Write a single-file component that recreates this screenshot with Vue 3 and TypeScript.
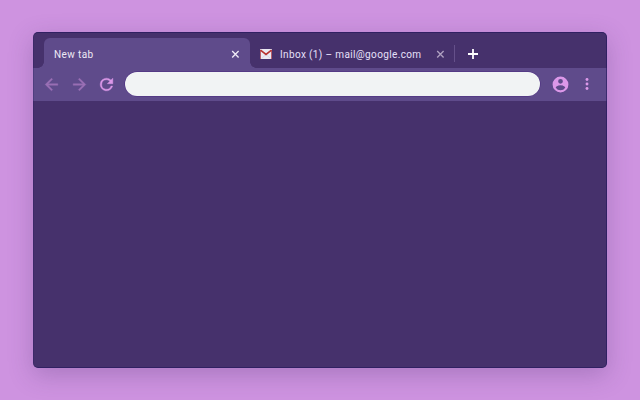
<script setup lang="ts">
import { ref } from 'vue'

const address = ref('')
</script>

<template>
  <main class="stage">
    <section class="browser">
      <header class="strip">
        <div class="tab active">
          <span class="title">New tab</span>
          <svg class="close" viewBox="0 0 9 9"><path d="M1.200 1l6.400 6.400M7.600 1L1.200 7.400" /></svg>
        </div>
        <div class="tab mail">
          <svg class="envelope" viewBox="0 0 14 12">
            <rect x="1" y="1" width="12" height="10" rx=".8" fill="#eae8f2" />
            <path d="M2.500 10.500L7 6.500l4.500 4" fill="none" stroke="#d2cddd" stroke-width=".7" />
            <path d="M1.500 11V2" fill="none" stroke="#b8606c" stroke-width="1" />
            <path d="M12.500 11V2" fill="none" stroke="#b8606c" stroke-width="1" />
            <path d="M1.500 2.200L7 6.500 12.500 2.200" fill="none" stroke="#b8322f" stroke-width="1.600" />
          </svg>
          <span class="title">Inbox (1) – mail@google.com</span>
          <svg class="close" viewBox="0 0 9 9"><path d="M1.200 1l6.400 6.400M7.600 1L1.200 7.400" /></svg>
        </div>
        <span class="divider"></span>
        <svg class="plus" viewBox="0 0 12 12"><path d="M6 1v10M1 6h10" /></svg>
      </header>
      <nav class="toolbar">
        <svg class="icon dim" viewBox="0 0 24 24"><path d="M20 11H7.830l5.590-5.590L12 4l-8 8 8 8 1.410-1.410L7.830 13H20v-2z" /></svg>
        <svg class="icon dim forward" viewBox="0 0 24 24"><path d="M12 4l-1.410 1.410L16.170 11H4v2h12.170l-5.580 5.590L12 20l8-8z" /></svg>
        <svg class="icon reload" viewBox="0 0 24 24"><path d="M17.650 6.350A7.960 7.960 0 0 0 12 4a8 8 0 1 0 7.730 10h-2.080A6 6 0 1 1 12 6c1.660 0 3.140.690 4.220 1.780L13 11h7V4z" /></svg>
        <input v-model="address" class="address" type="text" />
        <svg class="icon profile" viewBox="0 0 24 24"><path d="M12 2a10 10 0 1 0 0 20 10 10 0 0 0 0-20zm0 3a3 3 0 1 1 0 6 3 3 0 0 1 0-6zm0 14.200a7.200 7.200 0 0 1-6-3.220c.030-1.990 4-3.080 6-3.080s5.970 1.090 6 3.080a7.200 7.200 0 0 1-6 3.220z" /></svg>
        <svg class="dots" viewBox="0 0 4 12"><circle cx="2" cy="1.500" r="1.450" /><circle cx="2" cy="6" r="1.450" /><circle cx="2" cy="10.500" r="1.450" /></svg>
      </nav>
      <div class="page"></div>
    </section>
  </main>
</template>

<style>
body {
  margin: 0;
}
</style>

<style scoped>
.stage {
  box-sizing: border-box;
  width: 640px;
  height: 400px;
  padding: 32px 33px;
  background: #ce93e0;
  overflow: hidden;
  font-family: Roboto, sans-serif;
}
.browser {
  height: 336px;
  display: flex;
  flex-direction: column;
  overflow: hidden;
  border-radius: 5px;
  background: #46316c;
  box-shadow: 0 7px 24px rgba(70, 49, 108, 0.27);
  position: relative;
}
.browser::after {
  content: '';
  position: absolute;
  inset: 0;
  border: 1px solid rgba(34, 22, 92, 0.6);
  border-left-color: rgba(34, 22, 92, 0.25);
  border-radius: 5px;
  pointer-events: none;
}
.strip {
  box-sizing: border-box;
  display: flex;
  height: 36px;
  padding: 6px 0 0 11px;
  flex: none;
}
.tab {
  box-sizing: border-box;
  display: flex;
  align-items: center;
  height: 30px;
  padding-top: 2px;
  font-size: 10px;
  letter-spacing: 0.4px;
  line-height: 14px;
  white-space: nowrap;
  color: #eee9f5;
}
.active {
  position: relative;
  width: 206px;
  padding-left: 10px;
  padding-right: 10px;
  justify-content: space-between;
  border-radius: 6px 6px 0 0;
  background: #5f4b8b;
}
.active .title {
  padding-top: 1px;
}
.active::before,
.active::after {
  content: '';
  position: absolute;
  bottom: 0;
  width: 6px;
  height: 6px;
}
.active::before {
  right: 100%;
  background: radial-gradient(circle at 0 0, transparent 5.5px, #5f4b8b 6px);
}
.active::after {
  left: 100%;
  background: radial-gradient(circle at 100% 0, transparent 5.5px, #5f4b8b 6px);
}
.mail {
  width: 204px;
  padding-left: 9px;
  padding-right: 9px;
}
.mail .title {
  margin-left: 7px;
  padding-top: 2px;
  letter-spacing: 0.36px;
  color: #e6e0fa;
}
.mail .close {
  margin-left: auto;
  stroke: #ae9fc0;
}
.envelope {
  width: 14px;
  height: 12px;
}
.close {
  width: 9px;
  height: 9px;
  fill: none;
  stroke: #eee9f5;
  stroke-width: 1.35;
}
.divider {
  width: 1px;
  height: 17px;
  margin-top: 7px;
  background: #65508a;
}
.plus {
  width: 12px;
  height: 12px;
  margin: 10px 0 0 12px;
  fill: none;
  stroke: #fff;
  stroke-width: 1.8;
}
.toolbar {
  box-sizing: border-box;
  display: flex;
  align-items: center;
  height: 33px;
  flex: none;
  padding: 0 17px 1px 9px;
  background: #5f4b8b;
}
.icon {
  width: 19px;
  height: 19px;
  flex: none;
  fill: #dc98e9;
  stroke: #dc98e9;
  stroke-width: 0.5;
}
.dim {
  fill: #9a6fb5;
  stroke: #9a6fb5;
}
.forward {
  margin-left: 9px;
}
.reload {
  margin-left: 8px;
}
.address {
  box-sizing: border-box;
  width: 415px;
  height: 24px;
  margin: 0 0 0 9px;
  padding: 0 14px;
  border: 0;
  border-radius: 12px;
  outline: 0;
  background: #f1f3f4;
  box-shadow: 0 0 0 0.5px #4a2b80;
  color: #46316c;
  font: 11px Roboto, sans-serif;
}
.profile {
  margin-left: 11px;
  stroke: none;
}
.dots {
  width: 4px;
  height: 12px;
  margin-left: 15px;
  fill: #dc98e9;
}
.page {
  flex: 1;
}
</style>
